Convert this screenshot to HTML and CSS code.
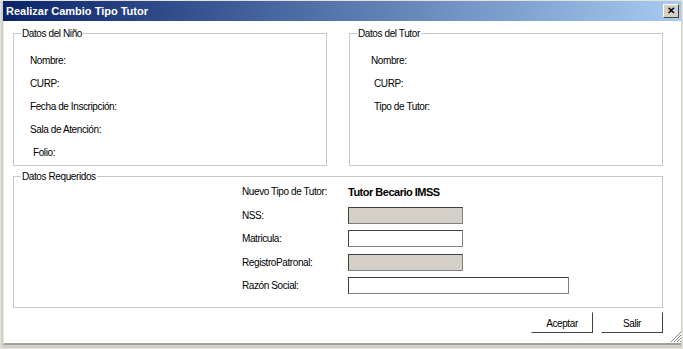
FILE: index.html
```html
<!DOCTYPE html>
<html lang="es">
<head>
  <meta charset="UTF-8">
  <title>Realizar Cambio Tipo Tutor</title>
  <link rel="stylesheet" href="styles.css">
</head>
<body>
  <div class="window">
    <!-- Barra de titulo -->
    <div class="titlebar">
      <span class="title">Realizar Cambio Tipo Tutor</span>
      <span class="close-btn">&#x2715;</span>
    </div>

    <div class="client">
      <div class="top-row">
        <fieldset class="group">
          <legend>Datos del Niño</legend>
          <div class="rows">
            <div class="row">Nombre:</div>
            <div class="row">CURP:</div>
            <div class="row">Fecha de Inscripción:</div>
            <div class="row">Sala de Atención:</div>
            <div class="row indent">Folio:</div>
          </div>
        </fieldset>

        <fieldset class="group">
          <legend>Datos del Tutor</legend>
          <div class="rows tutor">
            <div class="row">Nombre:</div>
            <div class="row indent">CURP:</div>
            <div class="row indent">Tipo de Tutor:</div>
          </div>
        </fieldset>
      </div>

      <fieldset class="group required">
        <legend>Datos Requeridos</legend>
        <div class="form-grid">
          <label>Nuevo Tipo de Tutor:</label>
          <span class="value">Tutor Becario IMSS</span>
          <label>NSS:</label>
          <input type="text" class="field disabled" disabled>
          <label>Matricula:</label>
          <input type="text" class="field">
          <label>RegistroPatronal:</label>
          <input type="text" class="field disabled" disabled>
          <label>Razón Social:</label>
          <input type="text" class="field wide">
        </div>
      </fieldset>

      <div class="actions">
        <button type="button" class="btn">Aceptar</button>
        <button type="button" class="btn">Salir</button>
      </div>

      <svg class="grip" width="12" height="12" viewBox="0 0 12 12">
        <path d="M11 1 L1 11 M11 4 L4 11 M11 7 L7 11 M11 10 L10 11" stroke="#808080" stroke-width="1"/>
        <path d="M12 2 L2 12 M12 5 L5 12 M12 8 L8 12" stroke="#ffffff" stroke-width="1"/>
      </svg>
    </div>
  </div>
</body>
</html>
```

FILE: styles.css
```css
body {
  margin: 0;
  padding: 0;
  background: #ffffff;
  font-family: "Liberation Sans", Arial, sans-serif;
  font-size: 10px;
  letter-spacing: -0.4px;
  color: #000;
}

.window {
  width: 683px;
  height: 349px;
  box-sizing: border-box;
  background: #d4d0c8;
  border: 1px solid #e4e2dc;
  padding: 0 1px 3px 2px;
  display: flex;
  flex-direction: column;
}

/* Barra de titulo */
.titlebar {
  height: 20px;
  flex: none;
  display: flex;
  align-items: center;
  justify-content: space-between;
  padding: 0 2px 0 3px;
  background: linear-gradient(to right, #0a246a, #a6caf0);
}

.title {
  color: #fff;
  font-weight: bold;
  font-size: 11px;
  letter-spacing: 0;
}

.close-btn {
  width: 16px;
  height: 14px;
  box-sizing: border-box;
  background: #d4d0c8;
  border: 1px solid;
  border-color: #fff #404040 #404040 #fff;
  font-size: 10px;
  font-weight: bold;
  line-height: 12px;
  text-align: center;
  letter-spacing: 0;
  color: #000;
}

.client {
  flex: 1;
  position: relative;
  background: #fff;
  border-left: 1px solid #e8e6e0;
  border-bottom: 2px solid #a0a0a0;
  padding: 6px 18px 0 9px;
}

.top-row {
  display: flex;
  gap: 22px;
}

.group {
  flex: 1;
  margin: 0;
  padding: 0;
  border: 1px solid #c8c8c8;
  min-width: 0;
}

.group legend {
  margin-left: 7px;
  padding: 0 1px;
  line-height: 13px;
  font-size: 10px;
}

.rows {
  padding: 9px 0 1px 16px;
}

.rows.tutor {
  padding-left: 21px;
}

.row {
  height: 23px;
  line-height: 23px;
}

.row.indent {
  padding-left: 3px;
}

.required {
  margin-top: 4px;
}

.form-grid {
  display: grid;
  grid-template-columns: 106px auto;
  grid-auto-rows: 17px;
  row-gap: 6.5px;
  align-items: center;
  justify-content: start;
  padding: 0 0 13px 228px;
}

.value {
  font-weight: bold;
  font-size: 11px;
  letter-spacing: -0.5px;
}

.field {
  width: 115px;
  height: 17px;
  box-sizing: border-box;
  margin: 0;
  padding: 0;
  border: 1px solid #404040;
  border-right-color: #808080;
  border-bottom-color: #808080;
  background: #fff;
}

.field.disabled {
  background: #d4d0c8;
}

.field.wide {
  width: 221px;
}

.actions {
  display: flex;
  justify-content: flex-end;
  gap: 8px;
  margin-top: 4px;
}

.btn {
  width: 62px;
  height: 21px;
  box-sizing: border-box;
  border: 1px solid;
  border-color: #fff #404040 #404040 #fff;
  background: #fff;
  font-family: inherit;
  font-size: 10px;
  letter-spacing: -0.4px;
  padding: 2px 0 0;
}

.grip {
  position: absolute;
  right: -1px;
  bottom: 0;
}
```
